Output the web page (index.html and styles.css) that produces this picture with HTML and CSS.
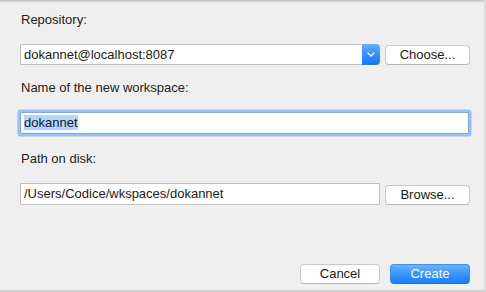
FILE: index.html
```html
<!DOCTYPE html>
<html>
<head>
<meta charset="utf-8">
<link rel="stylesheet" href="styles.css">
</head>
<body>
<div class="window">
  <div class="dialog">
    <div class="label">Repository:</div>
    <div class="row row-repo">
      <div class="combo">
        <div class="combo-text">dokannet@localhost:8087</div>
        <div class="combo-btn">
          <svg width="8" height="5" viewBox="0 0 8 5"><path d="M1 1 L4 4 L7 1" fill="none" stroke="#fff" stroke-width="1.3" stroke-linecap="round" stroke-linejoin="round"/></svg>
        </div>
      </div>
      <button class="btn btn-side">Choose...</button>
    </div>
    <div class="label label-name">Name of the new workspace:</div>
    <div class="field field-focus"><span class="sel">dokannet</span></div>
    <div class="label label-path">Path on disk:</div>
    <div class="row row-path">
      <div class="field field-path">/Users/Codice/wkspaces/dokannet</div>
      <button class="btn btn-side btn-browse">Browse...</button>
    </div>
    <div class="actions">
      <button class="btn btn-action">Cancel</button>
      <button class="btn btn-action btn-primary">Create</button>
    </div>
  </div>
</div>
</body>
</html>
```
FILE: styles.css
```css
html, body {
  margin: 0;
  padding: 0;
}
body {
  width: 486px;
  height: 292px;
  overflow: hidden;
  background: #ececec;
  font-family: "Liberation Sans", Arial, sans-serif;
  font-size: 13px;
  color: #222;
}
.window {
  width: 486px;
  height: 292px;
  box-sizing: border-box;
  background: linear-gradient(to bottom, rgba(0,0,0,0.22) 0, rgba(0,0,0,0.06) 2px, rgba(0,0,0,0) 4px), #efefef;
  border-right: 2px solid #dedede;
  border-bottom: 2px solid #d0d0d0;
}
.dialog {
  padding: 12px 0 0 20px;
  width: 450px;
}
.label {
  line-height: 16px;
  height: 16px;
  padding-left: 1px;
}
.row {
  display: flex;
  align-items: flex-start;
  gap: 5px;
}
.row-repo {
  margin-top: 16px;
}
.combo {
  width: 360px;
  height: 21px;
  box-sizing: border-box;
  display: flex;
  background: #fff;
  border: 1px solid #c2c2c2;
  border-right: none;
  border-radius: 0 4px 4px 0;
}
.combo-text {
  flex: 1;
  padding-left: 3px;
  line-height: 19px;
  color: #1a1a1a;
}
.combo-btn {
  width: 18px;
  margin: -1px 0;
  height: 21px;
  box-sizing: border-box;
  border-radius: 0 4px 4px 0;
  background: linear-gradient(to bottom, #6aaeff 0%, #3a90fe 45%, #1577fd 100%);
  display: flex;
  align-items: center;
  justify-content: center;
}
.btn {
  font-family: inherit;
  font-size: 13px;
  color: #1a1a1a;
  margin: 0;
  padding: 0;
  background: #fff;
  border: 1px solid #c8c8c8;
  border-bottom-color: #b5b5b5;
  border-radius: 4px;
  height: 20px;
  line-height: 18px;
  box-sizing: border-box;
  text-align: center;
}
.btn-side {
  width: 85px;
  margin-top: 1px;
}
.btn-browse {
  margin-top: 2px;
}
.label-name {
  margin-top: 15px;
}
.field {
  background: #fff;
  border: 1px solid #c2c2c2;
  box-sizing: border-box;
  padding-left: 3px;
  line-height: 20px;
  height: 22px;
  color: #1a1a1a;
}
.field-focus {
  margin-top: 16px;
  width: 449px;
  border-color: #7ea9e8;
  border-radius: 1px;
  box-shadow: 0 0 0 2.5px #9bc0f1;
}
.sel {
  background: #b3d5fe;
}
.label-path {
  margin-top: 17px;
}
.row-path {
  margin-top: 16px;
}
.field-path {
  width: 360px;
}
.actions {
  margin-top: 59px;
  display: flex;
  justify-content: flex-end;
  gap: 10px;
}
.btn-action {
  width: 80px;
}
.btn-primary {
  color: #fff;
  border: 1px solid #3f8ef5;
  border-bottom-color: #1c6fe6;
  background: linear-gradient(to bottom, #6db3fb 0%, #3a94fc 50%, #1580fd 100%);
}
```
